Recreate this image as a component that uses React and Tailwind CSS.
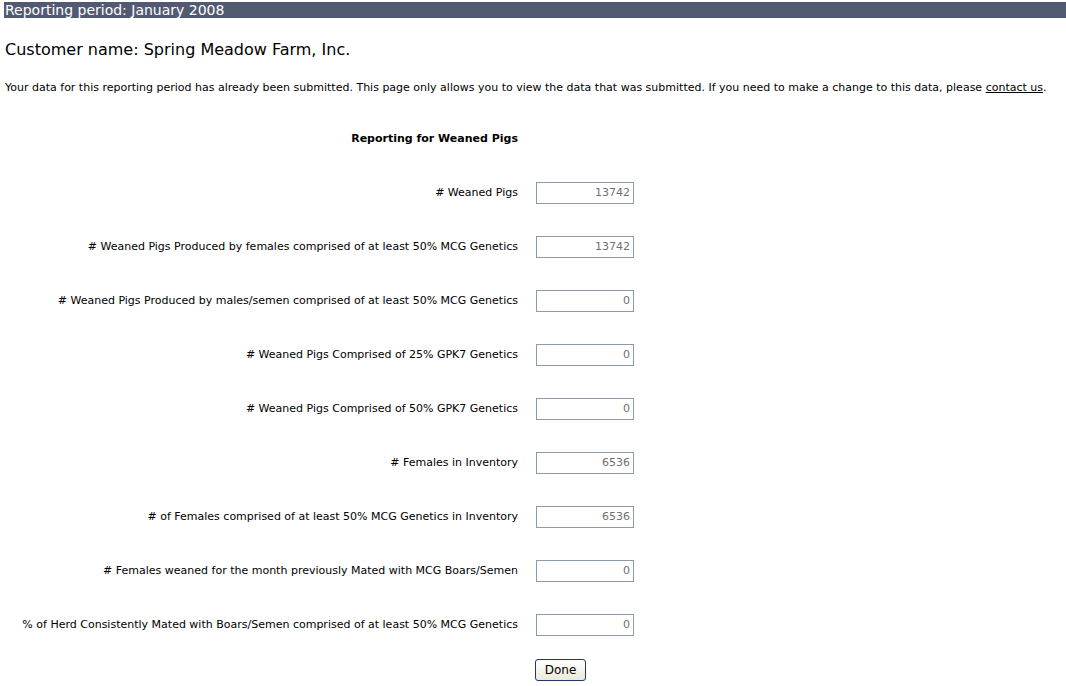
import React from "react";

const rows = [
  ["# Weaned Pigs", "13742"],
  ["# Weaned Pigs Produced by females comprised of at least 50% MCG Genetics", "13742"],
  ["# Weaned Pigs Produced by males/semen comprised of at least 50% MCG Genetics", "0"],
  ["# Weaned Pigs Comprised of 25% GPK7 Genetics", "0"],
  ["# Weaned Pigs Comprised of 50% GPK7 Genetics", "0"],
  ["# Females in Inventory", "6536"],
  ["# of Females comprised of at least 50% MCG Genetics in Inventory", "6536"],
  ["# Females weaned for the month previously Mated with MCG Boars/Semen", "0"],
  ["% of Herd Consistently Mated with Boars/Semen comprised of at least 50% MCG Genetics", "0"],
];

export default function App() {
  return (
    <div className="bg-white text-black w-[1066px] h-[686px] overflow-hidden pt-[2px]" style={{ fontFamily: '"DejaVu Sans", Verdana, sans-serif' }}>
      <div className="ml-[4px] h-[16px] bg-[#525a72] text-white text-[14px] leading-[16px] pl-[1px]">
        Reporting period: January 2008
      </div>
      <div className="mt-[22px] ml-[5px] text-[16px] leading-[20px]">Customer name: Spring Meadow Farm, Inc.</div>
      <div className="mt-[20px] ml-[5px] text-[11px] leading-[16px] whitespace-nowrap">
        Your data for this reporting period has already been submitted. This page only allows you to view the data that was submitted. If you need to make a change to this data, please <span className="underline">contact us</span>.
      </div>
      <div className="mt-[16px] flex items-center h-[54px]">
        <div className="w-[518px] text-right text-[11px] font-bold">Reporting for Weaned Pigs</div>
      </div>
      {rows.map(([label, value]) => (
        <div key={label} className="flex items-center h-[54px]">
          <div className="w-[518px] text-right text-[11px] whitespace-nowrap">{label}</div>
          <div className="ml-[18px] w-[98px] h-[22px] border border-[#8b9bab] bg-white text-right text-[11px] leading-[20px] pr-[3px] text-[#6f6f6f]">
            {value}
          </div>
        </div>
      ))}
      <div className="mt-[5px] ml-[535px]">
        <button className="w-[51px] h-[22px] rounded-[3px] border border-[#1c3a6b] bg-gradient-to-b from-white to-[#ece9d8] text-[12px] leading-[20px]">
          Done
        </button>
      </div>
    </div>
  );
}
